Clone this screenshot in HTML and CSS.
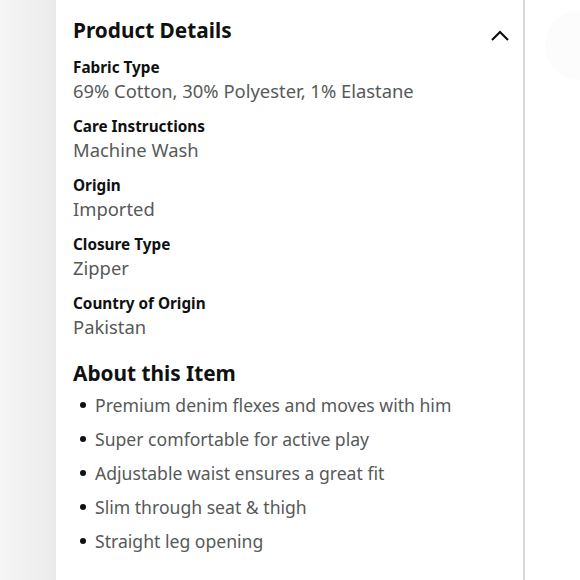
FILE: index.html
```html
<!DOCTYPE html>
<html lang="en">
<head>
<meta charset="utf-8">
<link rel="stylesheet" href="styles.css">
</head>
<body>
<div class="page">
  <div class="gutter"></div>
  <main class="panel">
    <div class="head">
      <h2 class="title">Product Details</h2>
      <svg class="chev" width="20" height="12" viewBox="0 0 20 12"><path d="M2 10 L10 2 L18 10" fill="none" stroke="#0f1111" stroke-width="2.2"/></svg>
    </div>
    <dl class="details">
      <div class="row"><dt>Fabric Type</dt><dd>69% Cotton, 30% Polyester, 1% Elastane</dd></div>
      <div class="row"><dt>Care Instructions</dt><dd>Machine Wash</dd></div>
      <div class="row"><dt>Origin</dt><dd>Imported</dd></div>
      <div class="row"><dt>Closure Type</dt><dd>Zipper</dd></div>
      <div class="row"><dt>Country of Origin</dt><dd>Pakistan</dd></div>
    </dl>
    <h2 class="title about">About this Item</h2>
    <ul class="bullets">
      <li>Premium denim flexes and moves with him</li>
      <li>Super comfortable for active play</li>
      <li>Adjustable waist ensures a great fit</li>
      <li>Slim through seat &amp; thigh</li>
      <li>Straight leg opening</li>
    </ul>
  </main>
  <div class="side"><div class="blob"></div></div>
</div>
</body>
</html>
```
FILE: styles.css
```css
html, body { margin: 0; padding: 0; background: #fff; }
body { font-family: "Noto Sans", "Open Sans", sans-serif; color: #0f1111; }
.page { display: flex; height: 580px; overflow: hidden; }
.gutter { width: 56px; flex: none; background: linear-gradient(to right, #f5f5f5, #ededed 85%, #e9e9e9); }
.panel { flex: none; padding: 16px 13px 0 17px; box-sizing: content-box; border-right: 2px solid #d8d8d8; background: #fff; width: 437px; }
.side { flex: 1; background: #fff; position: relative; }
.blob { position: absolute; left: 20px; top: 10px; width: 80px; height: 70px; background: #fcfcfc; border-radius: 40px 0 0 40px; }
.head { display: flex; justify-content: space-between; align-items: center; }
.title { margin: 0; font-size: 20.8px; line-height: 28px; font-weight: 700; }
.chev { display: block; margin-top: 12px; }
.details { margin: 12px 0 0; display: flex; flex-direction: column; gap: 11px; }
.row { display: flex; flex-direction: column; }
dt { font-size: 15.3px; line-height: 22px; font-weight: 700; }
dd { margin: 0; font-size: 18.4px; line-height: 26px; color: #565959; }
.about { margin-top: 19px; }
.bullets { list-style: none; margin: 6px 0 0; padding: 0; display: flex; flex-direction: column; gap: 10px; }
.bullets li { font-size: 17.6px; line-height: 24px; color: #565959; display: flex; align-items: center; }
.bullets li::before { content: ""; width: 6px; height: 6px; border-radius: 50%; background: #0f1111; margin: 0 9px 0 7px; flex: none; }
```
